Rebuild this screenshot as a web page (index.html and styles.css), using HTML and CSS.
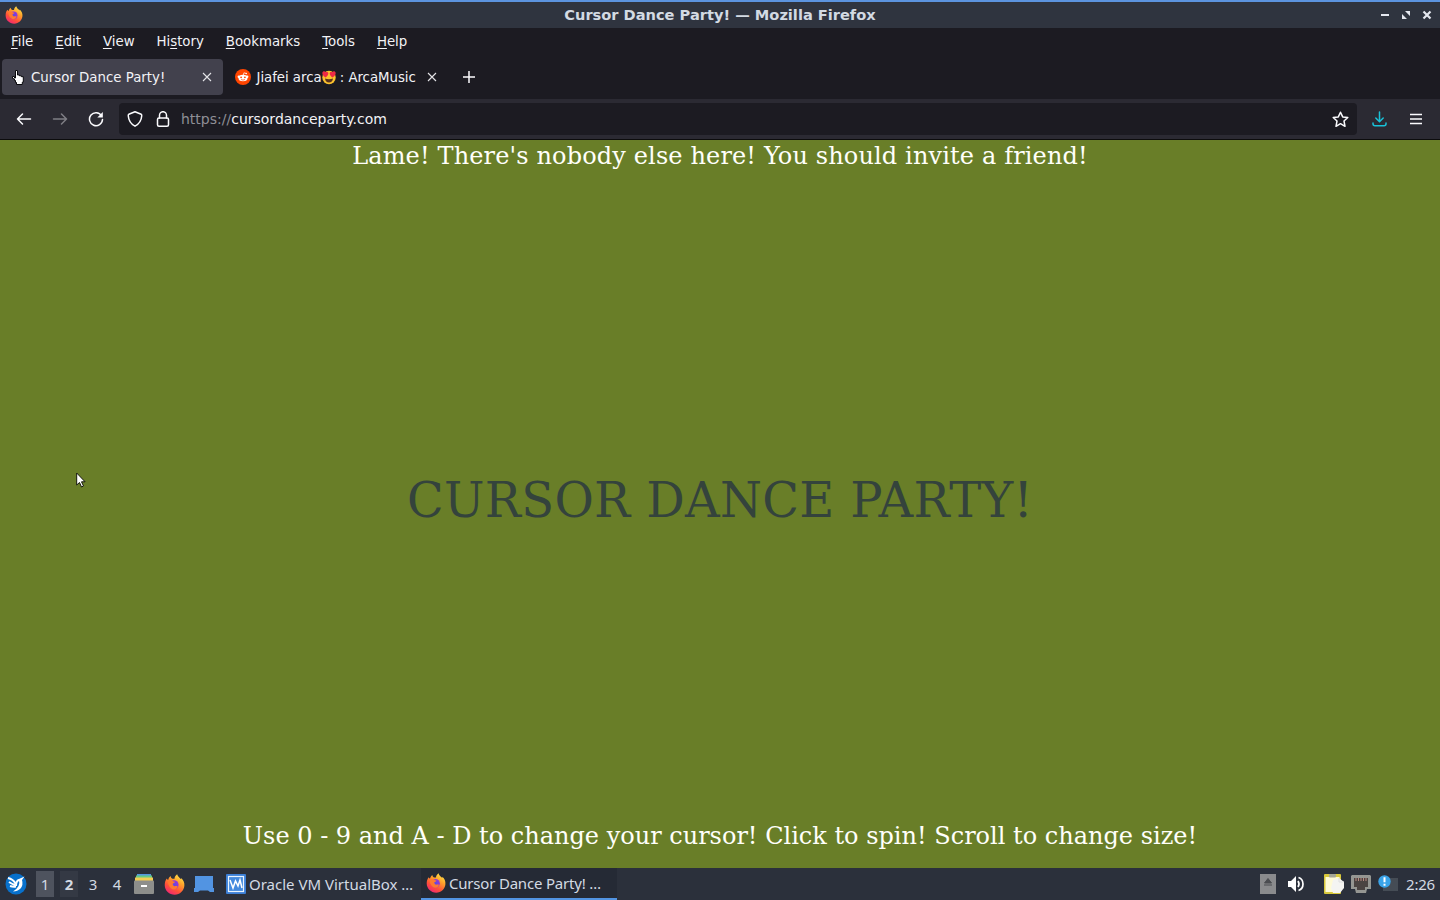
FILE: index.html
```html
<!DOCTYPE html>
<html lang="en">
<head>
<meta charset="utf-8">
<title>Cursor Dance Party!</title>
<link rel="stylesheet" href="styles.css">
</head>
<body>
<svg class="defs" width="0" height="0">
  <defs>
    <linearGradient id="flame" x1=".85" y1="0" x2=".25" y2="1"><stop offset="0" stop-color="#fff050"/><stop offset=".35" stop-color="#ffa52b"/><stop offset=".7" stop-color="#ff5138"/><stop offset="1" stop-color="#f02478"/></linearGradient>
    <radialGradient id="globe"><stop offset="0" stop-color="#5b4be0"/><stop offset="1" stop-color="#9b35d6"/></radialGradient>
    <symbol id="firefox" viewBox="0 0 20 20">
      <path fill="url(#flame)" d="M2.600 4.200C3 5 3.400 5.400 4 5.600C4.500 4 5.200 2.800 6.300 2C6.500 3.300 7 4 8 4.500L10 4.500C10 2.800 11 1.300 12.500 .2C13 2.500 15 3.400 16.300 5L16.400 3.800C18.500 5.800 19.700 8.300 19.400 11.200C19 16 15.200 19.700 10.200 19.700C5 19.700 .8 15.800 .7 10.600C.7 8 1.300 6 2.600 4.200Z"/>
      <circle cx="9.600" cy="10.300" r="4.300" fill="url(#globe)"/>
      <path fill="#ff7a2e" d="M4 6.500C6.500 5.600 8 6.200 9 7.200L10.500 7.400C10.200 8.500 9 8.700 8.300 9.300C8.300 11 9.500 12 11 11.500C11.700 11.300 12.500 11.300 13 11.800C12.200 14.700 9 15.700 6.700 13.700C4.600 12 3.300 9 4 6.500Z"/>
    </symbol>
  </defs>
</svg>
<header class="titlebar">
  <svg class="app-icon" width="18" height="18"><use href="#firefox"/></svg>
  <span class="window-title">Cursor Dance Party! — Mozilla Firefox</span>
  <svg class="window-controls" width="52" height="14" viewBox="0 0 52 14">
    <path d="M1 7h8" stroke="#e4e7ef" stroke-width="2"/>
    <path d="M25 3h5v5zM22 6v5h5z" fill="#e4e7ef"/>
    <path d="M43.500 3.500l7 7m0-7l-7 7" stroke="#e4e7ef" stroke-width="2.200"/>
  </svg>
</header>
<nav class="menubar">
  <span><u>F</u>ile</span><span><u>E</u>dit</span><span><u>V</u>iew</span><span>Hi<u>s</u>tory</span><span><u>B</u>ookmarks</span><span><u>T</u>ools</span><span><u>H</u>elp</span>
</nav>
<div class="tabs">
  <div class="tab active">
    <svg width="14" height="17" viewBox="0 0 14 17"><path d="M4.500 1.500h2V6h2v.8h2v.9h1.800v5.500h-1v2.300H5.500v-2h-1v-2h-1v-1.500h-1V9.500h-1v-2h2v1.500h1z" fill="#fff" stroke="#08080c" stroke-width="1"/></svg>
    <span class="tab-name">Cursor Dance Party!</span>
    <svg class="close" width="10" height="10" viewBox="0 0 10 10"><path d="M1 1l8 8m0-8l-8 8"/></svg>
  </div>
  <div class="tab second">
    <svg width="16" height="16" viewBox="0 0 16 16"><circle cx="8" cy="8" r="8" fill="#ff4500"/><path d="M8.300 6l.6-2.200 2 .5" stroke="#fff" fill="none" stroke-width=".7"/><circle cx="11.200" cy="4.500" r=".8" fill="#fff"/><circle cx="3.800" cy="7.800" r="1.200" fill="#fff"/><circle cx="12.200" cy="7.800" r="1.200" fill="#fff"/><ellipse cx="8" cy="9" rx="4.500" ry="3.200" fill="#fff"/><circle cx="6.100" cy="8.300" r=".9" fill="#ff4500"/><circle cx="9.900" cy="8.300" r=".9" fill="#ff4500"/><path d="M6 10.500q2 1.200 4 0" stroke="#ff4500" fill="none" stroke-width=".7"/></svg>
    <span class="tab-name">Jiafei arca<svg class="emoji" width="14" height="15" viewBox="0 0 14 15"><circle cx="7" cy="7.500" r="6.700" fill="#fbc12d"/><path d="M3.500 7.500C1 6 0 4.500.4 2.600C1.200.8 3 1 3.700 2.300C5 1.400 6.600 2 6.300 3.800C6 5.500 5 6.500 3.500 7.500ZM10.500 7.500C13 6 14 4.500 13.600 2.600C12.800.8 11 1 10.300 2.300C9 1.400 7.400 2 7.700 3.800C8 5.500 9 6.500 10.500 7.500Z" fill="#ed2945"/><path d="M3 8.500q4 1.300 8 0q-.5 4-4 4t-4-4z" fill="#59321c"/></svg> : ArcaMusic</span>
    <svg class="close" width="10" height="10" viewBox="0 0 10 10"><path d="M1 1l8 8m0-8l-8 8"/></svg>
  </div>
  <svg class="plus" width="12" height="12" viewBox="0 0 12 12"><path d="M6 0v12M0 6h12"/></svg>
</div>
<div class="toolbar">
  <svg class="ico back" width="16" height="16" viewBox="0 0 16 16"><path d="M14.500 8H1.500M6.500 3L1.500 8L6.500 13"/></svg>
  <svg class="ico forward" width="16" height="16" viewBox="0 0 16 16"><path d="M1.500 8h13M9.500 3L14.500 8L9.500 13"/></svg>
  <svg class="ico" width="16" height="16" viewBox="0 0 16 16"><path d="M13.500 4.700A6.500 6.500 0 1 0 14.500 8.500"/><path d="M14.800 1v5.500H9.300z" fill="#fbfbfe" stroke="none"/></svg>
  <div class="urlbar">
    <svg class="ico" width="16" height="16" viewBox="0 0 16 16"><path d="M8 .8L14.200 3.300C14.700 3.500 14.800 4 14.700 5C14.400 9.500 12 13 8 15.200C4 13 1.600 9.500 1.300 5C1.200 4 1.300 3.500 1.800 3.300Z"/></svg>
    <svg class="ico lock" width="14" height="16" viewBox="0 0 14 16"><rect x="1.500" y="7" width="11" height="8.200" rx="1.500"/><path d="M3.500 7V4.200a3.500 3.500 0 0 1 7 0V7"/></svg>
    <span class="url"><span class="scheme">https://</span>cursordanceparty.com</span>
    <svg class="ico star" width="17" height="17" viewBox="0 0 17 17"><path d="M8.500 1.200L10.700 5.900L15.800 6.500L12 10L13 15.300L8.500 12.700L4 15.300L5 10L1.200 6.500L6.300 5.900Z"/></svg>
  </div>
  <svg class="ico download" width="15" height="16" viewBox="0 0 15 16"><path d="M7.500 1v9.500M3.800 7L7.500 10.700L11.200 7M1 12v.8q0 2 2 2h9q2 0 2-2V12"/></svg>
  <svg class="ico menu" width="12" height="12" viewBox="0 0 12 12"><path d="M0 1.500h12M0 6h12M0 10.500h12"/></svg>
</div>
<main class="party">
  <p class="message greeting">Lame! There's nobody else here! You should invite a friend!</p>
  <h1>CURSOR DANCE PARTY!</h1>
  <p class="message">Use 0 - 9 and A - D to change your cursor! Click to spin! Scroll to change size!</p>
  <svg class="cursor" width="11" height="18" viewBox="0 0 11 18"><path d="M.7 1v12l2.800-2.500 2 4.500 2-1-2-4.200h3.600z" fill="#fff" stroke="#14170b"/></svg>
</main>
<footer class="taskbar">
  <svg class="start" width="22" height="22" viewBox="0 0 22 22"><circle cx="11" cy="11" r="10.500" fill="#0871cc"/><path d="M3 5Q8 6 11 11M4 9Q7 11 10 12M5 13Q8 14 11 13.500" fill="none" stroke="#fff" stroke-width="2"/><path d="M10.500 10.500Q11 6 14.500 5.700L19.500 3.500L17 7Q18.500 12 15.500 15.500Q12.500 18.500 8 18.500Q12 16 13.500 13Q15 10 14 8Q12 9 12 13L9.500 13Z" fill="#fff"/></svg>
  <div class="desks"><span class="occupied">1</span><span class="current">2</span><span>3</span><span>4</span></div>
  <svg class="files" width="20" height="20" viewBox="0 0 20 20"><path d="M3 0h14v3H3z" fill="#5598df"/><path d="M2 1.500h16v3H2z" fill="#66c985"/><path d="M1 3.500h18v4H1z" fill="#f3cc54"/><rect y="6.500" width="20" height="13.500" rx="1" fill="#8d8e8b"/><path d="M7 12h6" stroke="#fff" stroke-width="2"/></svg>
  <svg class="fox" width="21" height="21"><use href="#firefox"/></svg>
  <svg class="desktop" width="20" height="16" viewBox="0 0 20 16"><path d="M1 0h18v12h1v4h-4l-2-1.500H6L4 16H0v-4h1z" fill="#5294e2"/></svg>
  <div class="task vm">
    <svg width="20" height="20" viewBox="0 0 20 20"><rect width="20" height="20" rx="1" fill="#3c7fd6"/><rect x="2.500" y="2.500" width="15" height="15" fill="#448ade" stroke="#e9f4ff" stroke-width="1.200"/><path d="M4 6l3 8 2.500-7 2.500 5 2-6 2 8" fill="none" stroke="#fff" stroke-width="1.500"/></svg>
    <span>Oracle VM VirtualBox …</span>
  </div>
  <div class="task selected">
    <svg width="20" height="20"><use href="#firefox"/></svg>
    <span>Cursor Dance Party! …</span>
  </div>
  <div class="tray">
    <svg width="16" height="20" viewBox="0 0 16 20"><rect width="16" height="20" fill="#8a8b8d"/><path d="M8 4.500l3.500 4.500h-7zM4 11h8" fill="#4b4d51" stroke="#4b4d51"/></svg>
    <svg class="sound" width="17" height="16" viewBox="0 0 17 16"><path d="M0 5h3l5-5v16l-5-5H0z" fill="#fff"/><path d="M10 5q2 3 0 6M10.500 1.500c6 2 6 11 0 13" fill="none" stroke="#fff" stroke-width="1.700"/></svg>
    <svg class="clipboard" width="20" height="20" viewBox="0 0 20 20"><rect width="17" height="20" rx="1" fill="#d9c93c"/><path d="M1.500 3h14v15h-14z" fill="#fffbd6"/><rect x="5" width="7" height="3.500" rx="1" fill="#a5a696"/><path d="M9 6l6-2 5 4v6l-4 5H9l-2-5z" fill="#f4f4f2"/><path d="M15 4v4h5" fill="none" stroke="#dedede"/></svg>
    <svg class="network" width="20" height="18" viewBox="0 0 20 18"><path d="M1 0h18l1 1v13h-4l-1 4H5l-1-4H0V1z" fill="#959692"/><path d="M3 3h14v9h-3v3H6v-3H3z" fill="#4b4442"/><path d="M5 3v3m2.500-3v3M10 3v3m2.500-3v3M15 3v3" stroke="#b88980"/></svg>
    <svg class="notice" width="20" height="18" viewBox="0 0 20 18"><path d="M5 3h15v13H5z" fill="#454c55"/><circle cx="6.500" cy="6.500" r="6.200" fill="#3aa3e8"/><path d="M6.500 2.300v5M6.500 8.700v2" stroke="#fff" stroke-width="2"/></svg>
    <time>2:26</time>
  </div>
</footer>
</body>
</html>
```
FILE: styles.css
```css
* { box-sizing: border-box; }
body { margin: 0; width: 1440px; height: 900px; overflow: hidden; display: flex; flex-direction: column; font: 13.330px "DejaVu Sans", sans-serif; color: #f2f2f6; background: #1c1b22; }
svg { display: block; flex: none; }
.defs { position: absolute; }
.titlebar { height: 28px; border-top: 2px solid #5c94df; background: #2f343f; display: grid; grid-template-columns: 60px 1fr 60px; align-items: center; color: #d3dae3; }
.app-icon { margin-left: 5px; }
.window-title { text-align: center; font-size: 14.600px; font-weight: bold; line-height: 20px; }
.window-controls { justify-self: end; margin-right: 8px; }
.menubar { height: 28px; display: flex; align-items: center; gap: 21.900px; padding: 0 11px 2px; }
.menubar u { text-underline-offset: 2px; text-decoration-thickness: 1px; }
.tabs { height: 43px; display: flex; align-items: flex-start; padding: 3px 2px 0; }
.tab { height: 36px; display: flex; align-items: center; }
.tab.active { width: 221px; background: #42414d; border-radius: 4px; padding: 0 11px 0 9px; }
.active .tab-name { margin-left: 6px; }
.close { margin-left: auto; fill: none; stroke: #e4e4e8; stroke-width: 1.100; }
.second { width: 226px; padding: 0 12px; }
.second .tab-name { margin-left: 5.500px; white-space: nowrap; letter-spacing: -.04px; }
.emoji { display: inline-block; vertical-align: -3px; }
.plus { margin: 12px 0 0 14px; stroke: #fbfbfe; stroke-width: 1.500; }
.toolbar { height: 41px; background: #2b2a33; border-bottom: 1px solid #0c0c0d; display: flex; align-items: center; padding: 0 18px 0 16px; }
.ico { fill: none; stroke: #fbfbfe; stroke-width: 1.500; stroke-linecap: round; stroke-linejoin: round; }
.back { margin-right: 20px; }
.forward { opacity: .4; margin-right: 20px; }
.urlbar { width: 1238px; height: 32px; margin-left: 15px; border-radius: 4px; background: #1c1b22; display: flex; align-items: center; padding: 0 8px; }
.lock { margin-left: 13px; }
.url { margin-left: 11px; font-size: 14px; }
.scheme { color: #8f8f96; }
.star { margin-left: auto; }
.download { margin-left: 15px; stroke: #19c2d8; }
.menu { margin-left: auto; stroke-linecap: butt; stroke-width: 1.400; }
.party { position: relative; height: 728px; background: #697e28; display: flex; flex-direction: column; align-items: center; padding: 2px 0 18px; font-family: "DejaVu Serif", serif; }
.message { margin: 0; font-size: 24px; line-height: 28px; color: #fffffa; white-space: nowrap; }
.greeting { letter-spacing: .14px; }
.party h1 { margin: auto 0; padding-top: 8px; font-size: 48px; line-height: 56px; letter-spacing: .33px; font-weight: 400; color: #34433c; }
.cursor { position: absolute; left: 76px; top: 332px; }
.taskbar { height: 32px; background: #2b303b; display: flex; align-items: center; padding-left: 5px; color: #d3dae3; font-family: "Noto Sans", sans-serif; font-size: 15px; }
.desks { display: flex; gap: 6px; margin-left: 9px; }
.desks span { width: 18px; height: 26px; line-height: 26px; text-align: center; }
.desks .occupied { background: #4e535e; }
.desks .current { background: #343944; font-weight: bold; }
.files { margin-left: 8px; }
.fox { margin-left: 10px; }
.desktop { margin-left: 9px; }
.task { height: 32px; width: 196px; display: flex; align-items: center; gap: 3px; white-space: nowrap; }
.vm { margin-left: 12px; width: 195px; }
.selected { border-bottom: 2px solid #5294e2; padding-left: 5px; background: #252a35; letter-spacing: -.2px; }
.tray { margin-left: auto; display: flex; align-items: center; padding-right: 5px; }
.sound { margin-left: 12px; }
.clipboard { margin-left: 19px; }
.network { margin-left: 7px; }
.notice { margin-left: 7px; }
.tray time { margin-left: 8px; letter-spacing: -.2px; }
```
